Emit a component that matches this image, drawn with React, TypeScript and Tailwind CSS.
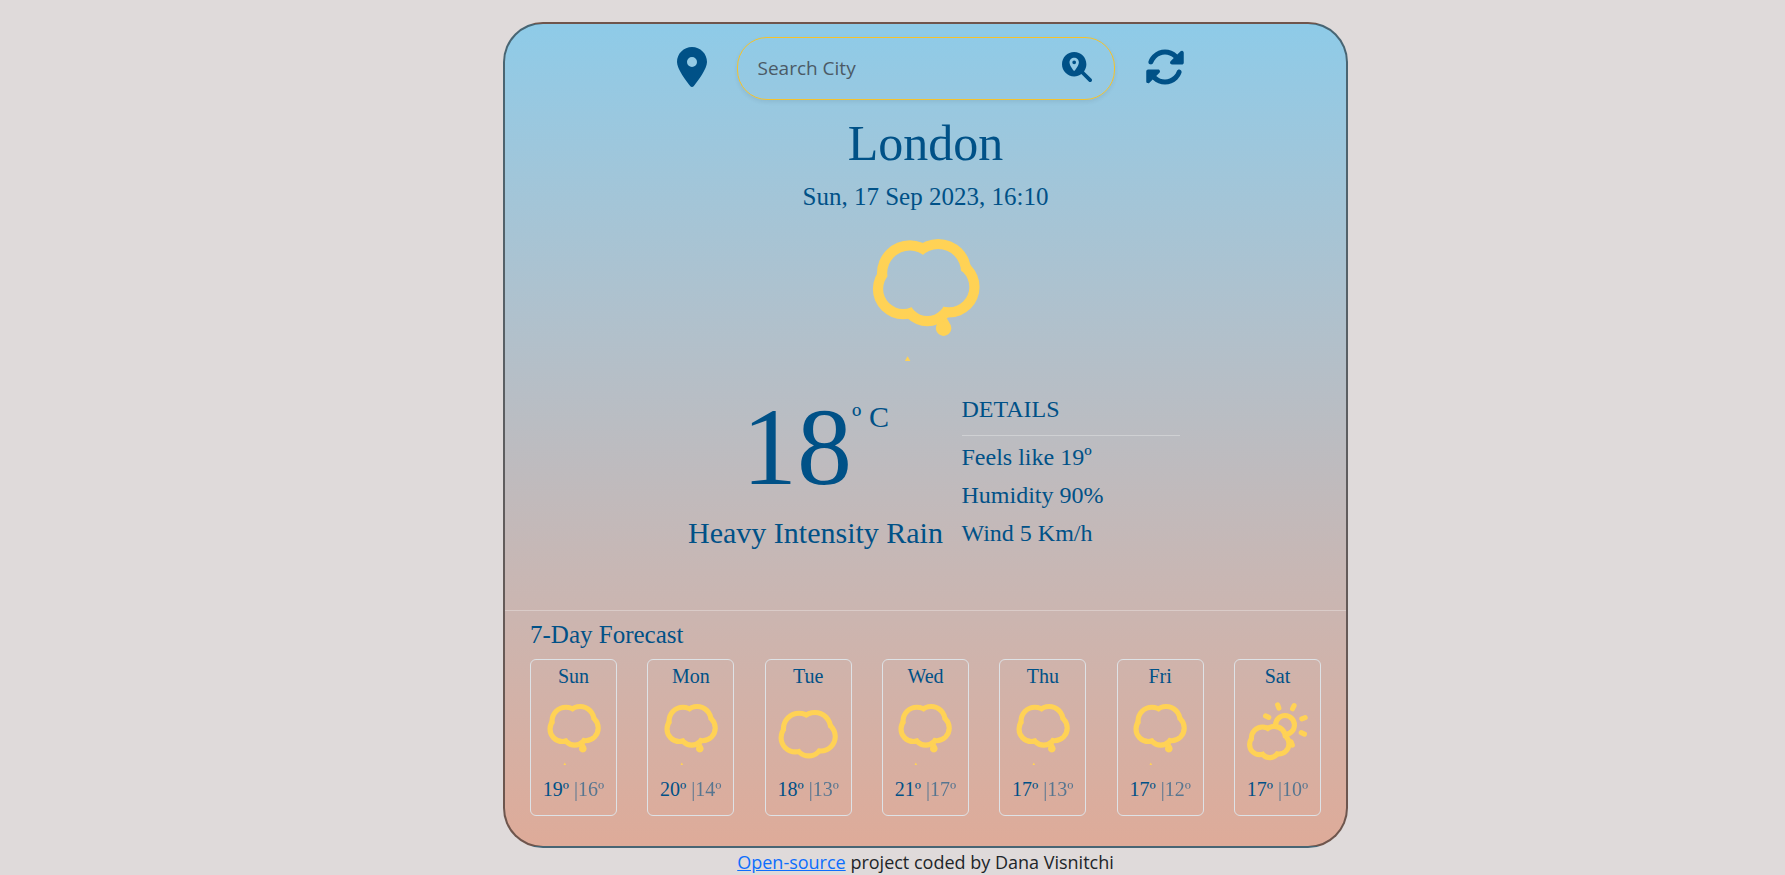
import { useId } from "react";
import { FaLocationDot, FaMagnifyingGlassLocation, FaRotate } from "react-icons/fa6";

const TAU = Math.PI * 2;
const PHASE = -0.012;
const STROKE = 10.24;
const YELLOW = "#ffd255";

type Sky = "rain" | "cloudy" | "partly";

function puffs(cx: number, cy: number, cw: number, inset: number) {
  return [0, 1, 2, 3, 4].map((i) => {
    const angle = (PHASE + i / 5) * TAU;
    const rMin = cw * 0.23 - inset;
    const spread = cw * 0.04;
    return {
      cx: cx - Math.sin(angle) * cw * 0.21,
      cy: cy + Math.cos(angle) * cw * 0.12 + spread * 0.5,
      r: rMin + (1 - Math.cos(angle) * 0.5) * spread,
    };
  });
}

function Raindrop({ x, y }: { x: number; y: number }) {
  const r = STROKE * 0.75;
  const dx = r * Math.cos(Math.PI / 6);
  const dy = r * 0.5;
  return (
    <path
      d={`M${x} ${y - STROKE * 1.5}L${x + dx} ${y - dy}A${r} ${r} 0 1 1 ${x - dx} ${y - dy}Z`}
    />
  );
}

function Sun() {
  const rays = [0, 1, 2, 3, 4, 5, 6, 7].map((i) => ((i * 45 - 20) * Math.PI) / 180);
  return (
    <g fill="none" stroke={YELLOW} strokeWidth={STROKE} strokeLinecap="round">
      <circle cx={80} cy={48} r={18.9} />
      {rays.map((a) => (
        <line
          key={a}
          x1={80 + Math.cos(a) * 35.8}
          y1={48 + Math.sin(a) * 35.8}
          x2={80 + Math.cos(a) * 42.9}
          y2={48 + Math.sin(a) * 42.9}
        />
      ))}
    </g>
  );
}

const CLOUDS: Record<Sky, [number, number, number]> = {
  rain: [63.5, 48.4, 115.2],
  cloudy: [63.5, 65, 128],
  partly: [48, 81, 96],
};

function SkyIcon({ sky, className }: { sky: Sky; className: string }) {
  const id = useId();
  const [cx, cy, cw] = CLOUDS[sky];
  return (
    <svg viewBox="0 0 128 128" className={className} aria-hidden="true">
      <mask id={id} maskUnits="userSpaceOnUse" x="0" y="0" width="128" height="128">
        <rect width="128" height="128" fill="white" />
        {puffs(cx, cy, cw, STROKE).map((p, i) => (
          <circle key={i} {...p} fill="black" />
        ))}
      </mask>
      <g mask={`url(#${id})`} fill={YELLOW}>
        {sky === "rain" && (
          <>
            <Raindrop x={45.6} y={138.6} />
            <Raindrop x={81.6} y={95.2} />
          </>
        )}
        {sky === "partly" && <Sun />}
        {puffs(cx, cy, cw, 0).map((p, i) => (
          <circle key={i} {...p} />
        ))}
      </g>
    </svg>
  );
}

const DAYS: { day: string; sky: Sky; high: number; low: number }[] = [
  { day: "Sun", sky: "rain", high: 19, low: 16 },
  { day: "Mon", sky: "rain", high: 20, low: 14 },
  { day: "Tue", sky: "cloudy", high: 18, low: 13 },
  { day: "Wed", sky: "rain", high: 21, low: 17 },
  { day: "Thu", sky: "rain", high: 17, low: 13 },
  { day: "Fri", sky: "rain", high: 17, low: 12 },
  { day: "Sat", sky: "partly", high: 17, low: 10 },
];

function SearchBar() {
  return (
    <div className="flex items-center justify-center gap-[30px] pt-[13px] pl-[10px]">
      <button type="button" aria-label="Use current location" className="pb-1">
        <FaLocationDot className="h-10 w-[30px]" />
      </button>
      <form
        className="flex h-[63px] w-[378px] min-w-0 items-center rounded-[30px] border border-[#f5c22b] pr-[22px] pl-5 shadow-[0_2px_4px_rgba(0,0,0,0.075)]"
        onSubmit={(e) => e.preventDefault()}
      >
        <input
          type="text"
          aria-label="Search City"
          placeholder="Search City"
          className="min-w-0 flex-1 bg-transparent font-['Open_Sans',sans-serif] text-[19px] text-[#212529] outline-none placeholder:text-[#4b5a66]"
        />
        <button type="submit" aria-label="Search" className="pb-1">
          <FaMagnifyingGlassLocation className="size-[30px]" />
        </button>
      </form>
      <button type="button" aria-label="Refresh" className="pb-1">
        <FaRotate className="size-10" />
      </button>
    </div>
  );
}

export default function App() {
  return (
    <div className="min-h-screen bg-[#dfdada] pt-[22px] pl-[66px]">
      <main className="mx-auto max-w-[845px] rounded-[40px] border-2 border-black/50 bg-linear-to-b from-[#8ecbe8] to-[#deab99] pb-[30px] font-['Liberation_Serif',serif] text-[#005187]">
        <SearchBar />
        <h1 className="mt-[13px] text-center text-[50px] leading-[60px]">London</h1>
        <p className="mt-2 text-center text-[25px] leading-8">Sun, 17 Sep 2023, 16:10</p>
        <SkyIcon sky="rain" className="mx-auto mt-5 size-32" />

        <section className="mt-[30px] flex justify-center gap-[18px] pl-4">
          <div className="flex w-[256px] flex-col items-center">
            <div className="flex items-start">
              <span className="text-[110px] leading-[112px]">18</span>
              <span className="pt-2 text-[30px] leading-9">º C</span>
            </div>
            <p className="mt-3 text-[30px] leading-9 whitespace-nowrap">Heavy Intensity Rain</p>
          </div>
          <div className="w-[218px] text-2xl leading-[38px]">
            <h2 className="pb-2 leading-9">DETAILS</h2>
            <hr className="mb-0.5 border-white/30" />
            <p>Feels like 19º</p>
            <p>Humidity 90%</p>
            <p>Wind 5 Km/h</p>
          </div>
        </section>

        <hr className="mt-[58px] border-white/30" />
        <section className="px-[25px] pt-2">
          <h2 className="text-[25px] leading-8">7-Day Forecast</h2>
          <ul className="mt-2 flex justify-between">
            {DAYS.map(({ day, sky, high, low }) => (
              <li
                key={day}
                className="flex h-[157px] w-[87px] flex-col items-center rounded-md border border-[#dee2e6] pt-1 text-xl leading-6"
              >
                <span>{day}</span>
                <SkyIcon sky={sky} className="mt-[13px] size-16" />
                <span className="mt-3 whitespace-nowrap">
                  {high}º <span className="opacity-60">|{low}º</span>
                </span>
              </li>
            ))}
          </ul>
        </section>
      </main>
      <footer className="text-center font-['Open_Sans',sans-serif] text-lg leading-7 text-[#212529]">
        <a href="#source" className="text-[#0d6efd] underline">
          Open-source
        </a>{" "}
        project coded by Dana Visnitchi
      </footer>
    </div>
  );
}
